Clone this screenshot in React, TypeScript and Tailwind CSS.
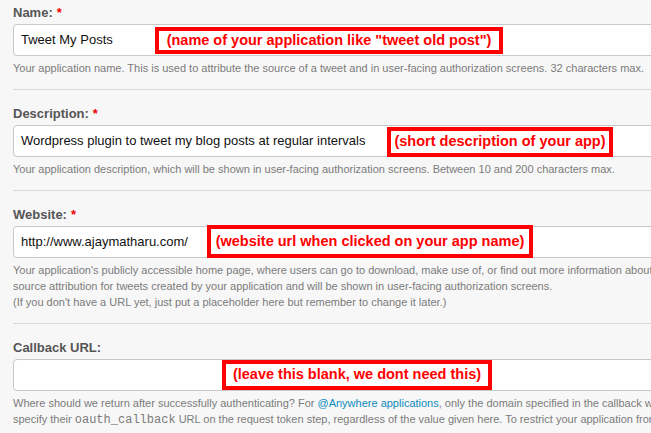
import React from "react";

const font = { fontFamily: '"Liberation Sans", Arial, sans-serif' };

function Field({
  label,
  required,
  value,
  note,
  box,
  help,
  last,
}: {
  label: string;
  required?: boolean;
  value?: string;
  note: string;
  box: string;
  help: React.ReactNode;
  last?: boolean;
}) {
  return (
    <div className="mb-[16px]">
      <div className="h-4 text-[13px] leading-4 font-bold text-[#555]">
        {label}
        {required && <span className="text-[#e00] ml-[4px]">*</span>}
      </div>
      <div className="relative mt-[3px] h-[32px] w-[760px] bg-white border border-[#c8c8c8] rounded-l-[4px] flex items-center pl-[7px] text-[13px] text-[#111]">
        {value}
        <div
          className={
            "absolute border-[4px] border-[#ff0000] bg-white flex items-center justify-center text-[#ff0000] font-bold text-[14.5px] whitespace-nowrap " +
            box
          }
        >
          {note}
        </div>
      </div>
      <div className="mt-[4px] text-[11px] leading-4 text-[#7b7b7b] whitespace-nowrap">
        {help}
      </div>
      {!last && <div className="mt-[13px] h-px w-[760px] bg-[#d9d9d9]" />}
    </div>
  );
}

export default function App() {
  return (
    <div
      className="w-[651px] h-[433px] overflow-hidden bg-[#f7f7f7] px-[13px] pt-[5px]"
      style={font}
    >
      <Field
        label="Name:"
        required
        value="Tweet My Posts"
        note={'(name of your application like "tweet old post")'}
        box="left-[141px] top-[2px] w-[348px] h-[27px]"
        help="Your application name. This is used to attribute the source of a tweet and in user-facing authorization screens. 32 characters max."
      />
      <Field
        label="Description:"
        required
        value="Wordpress plugin to tweet my blog posts at regular intervals"
        note="(short description of your app)"
        box="left-[373px] top-[1px] w-[226px] h-[30px]"
        help="Your application description, which will be shown in user-facing authorization screens. Between 10 and 200 characters max."
      />
      <Field
        label="Website:"
        required
        value="http://www.ajaymatharu.com/"
        note="(website url when clicked on your app name)"
        box="left-[193px] top-[-2px] w-[326px] h-[33px]"
        help={
          <>
            <div>
              Your application's publicly accessible home page, where users can go to download, make use of, or find out more information about your application. This fully-qualified URL is used in the
            </div>
            <div>
              source attribution for tweets created by your application and will be shown in user-facing authorization screens.
            </div>
            <div>
              (If you don't have a URL yet, just put a placeholder here but remember to change it later.)
            </div>
          </>
        }
      />
      <Field
        label="Callback URL:"
        value=""
        note="(leave this blank, we dont need this)"
        box="left-[208px] top-[0px] w-[270px] h-[30px]"
        last
        help={
          <>
            <div>
              Where should we return after successfully authenticating? For{" "}
              <span className="text-[#0e8bbd]">@Anywhere applications</span>, only the domain specified in the callback will be used. OAuth 1.0a applications should explicitly
            </div>
            <div>
              specify their{" "}
              <span
                className="text-[12px]"
                style={{ fontFamily: '"Liberation Mono", "Courier New", monospace' }}
              >
                oauth_callback
              </span>{" "}
              URL on the request token step, regardless of the value given here. To restrict your application from using callbacks, leave this field blank.
            </div>
          </>
        }
      />
    </div>
  );
}
